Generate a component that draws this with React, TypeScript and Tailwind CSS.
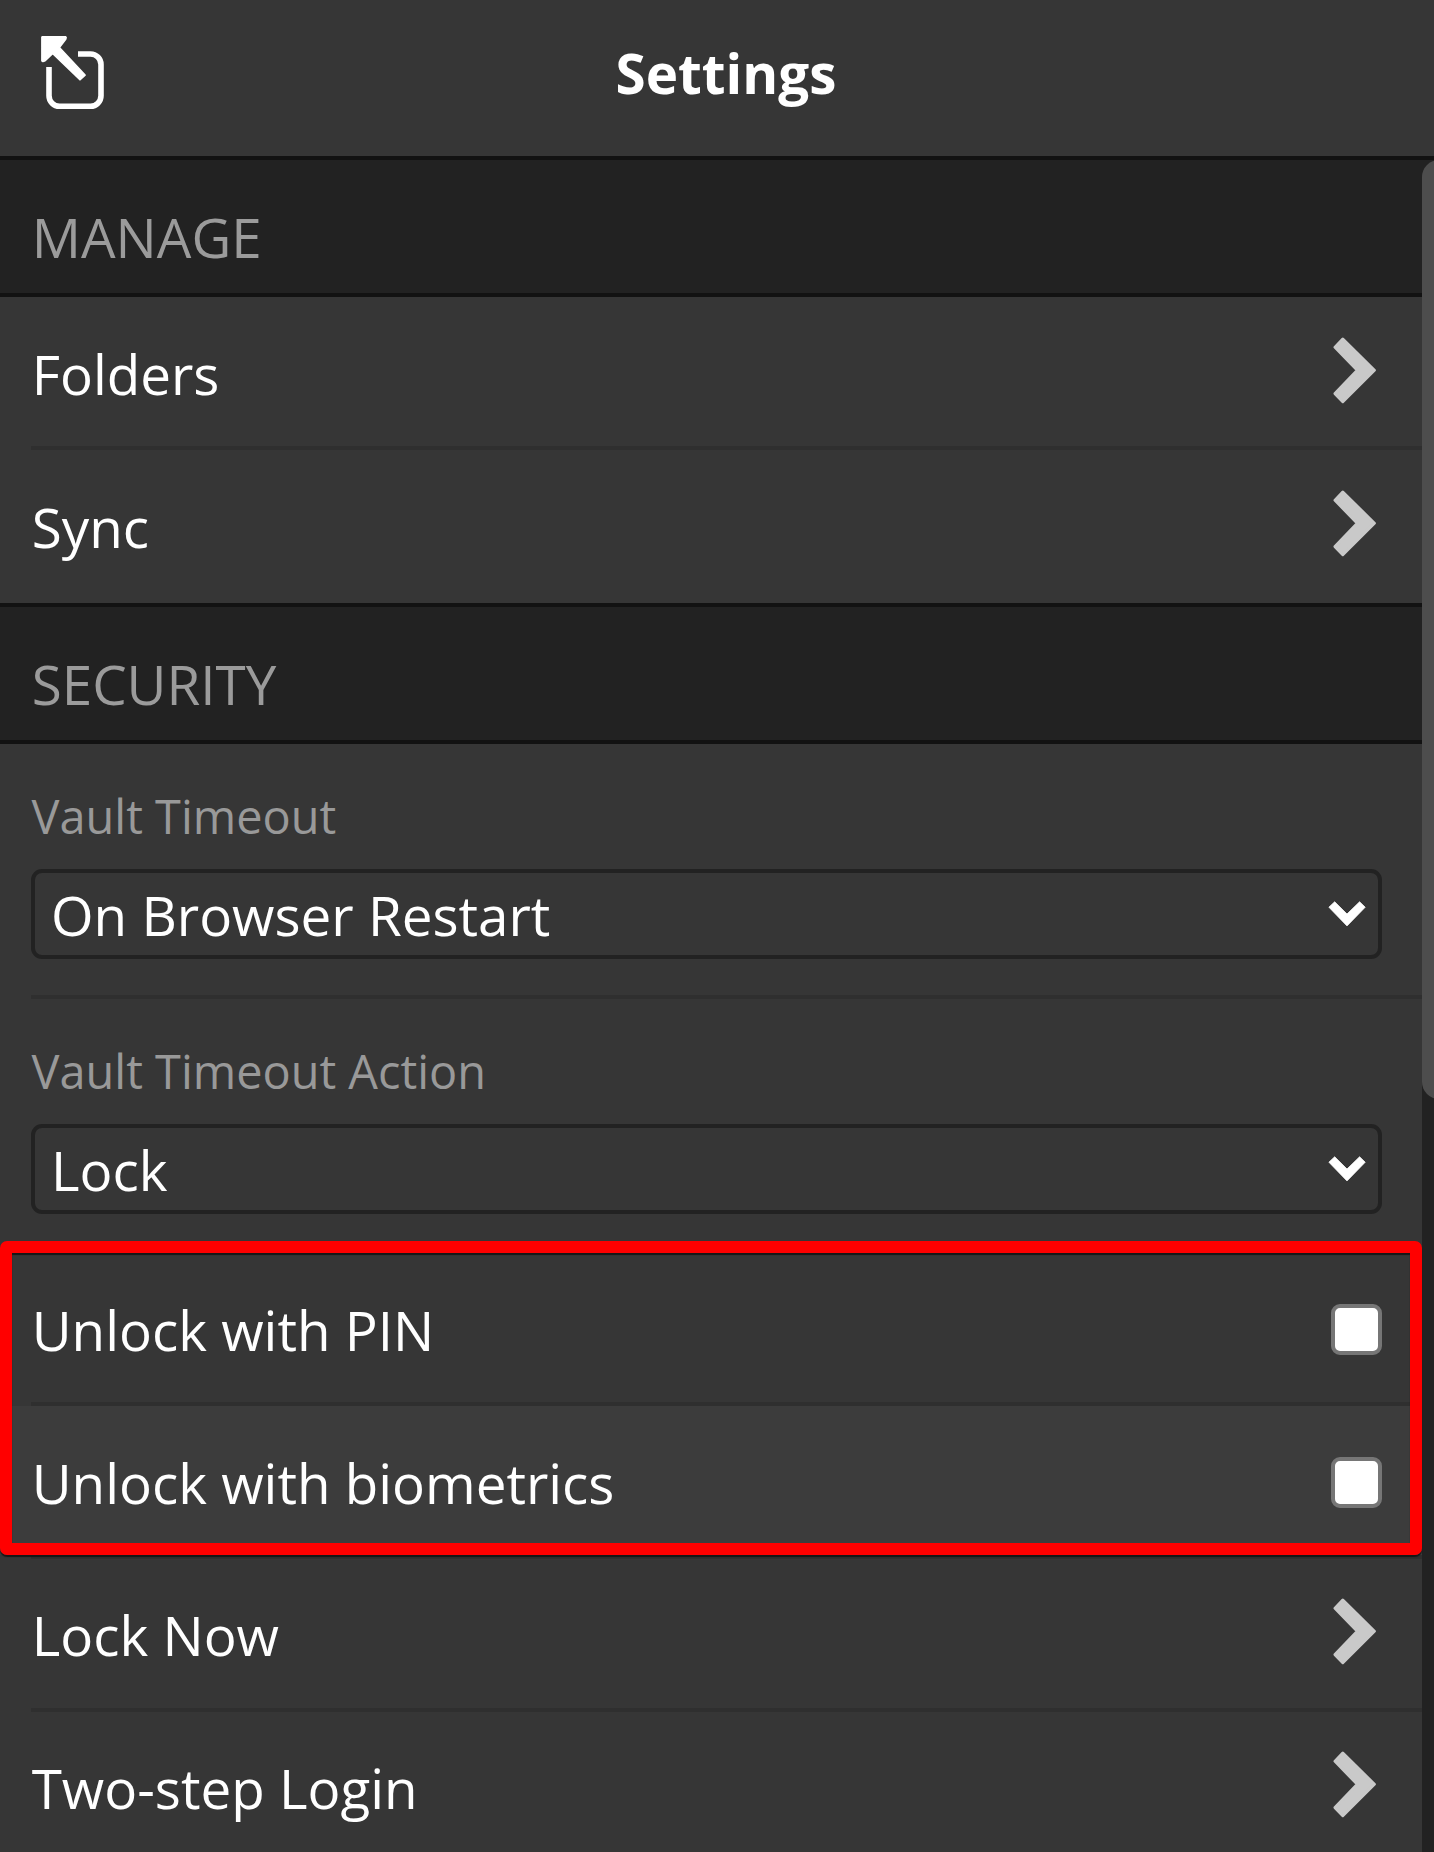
import type { ReactNode } from "react";

function PopOutIcon() {
  return (
    <svg width="66" height="76" viewBox="40 34 66 76" fill="none" className="block">
      <path d="M78 54H90.5A10.5 10.5 0 0 1 101 64.5V95.8A10.5 10.5 0 0 1 90.5 106.3H59.5A10.5 10.5 0 0 1 49 95.8V67" stroke="#fff" strokeWidth="5.6" />
      <path d="M42.3 36.8H65.5Q66.6 37.6 65.6 39.2L59.3 47.5L85 75L80 79.7L52.7 53.3L44.8 60.8Q42.6 62 42 60.6V37.2Z" fill="#fff" stroke="#fff" strokeWidth="1.8" strokeLinejoin="round" />
    </svg>
  );
}

function ChevronRight({ className = "mt-[39px]" }: { className?: string }) {
  return (
    <svg width="45" height="68" viewBox="0 0 45 68" className={`mr-[44px] block shrink-0 ${className}`}>
      <path d="M9.8 2L2 10.2L24.3 33.3L2 56.6L9.8 64.6L41.4 33.3Z" fill="#c9c9c9" stroke="#c9c9c9" strokeWidth="3" strokeLinejoin="round" />
    </svg>
  );
}

function ChevronDown() {
  return (
    <svg width="39" height="26" viewBox="0 0 39 26" className="mt-[28px] mr-[11px] block shrink-0">
      <path d="M6.7 0.8L19 13L31.6 0.8L37.2 6.2L19 24.9L0.9 6.2Z" fill="#fff" stroke="#fff" strokeWidth="0.8" strokeLinejoin="round" />
    </svg>
  );
}

function SectionHeading({ children }: { children: ReactNode }) {
  return (
    <h2 className="h-[137px] border-b-4 border-[#121212] bg-[#222222] pt-[40px] pl-[31.7px] text-[#9b9b9b]">
      {children}
    </h2>
  );
}

function Divider() {
  return <div className="ml-[31px] h-1 bg-[#2f2f2f]" />;
}

function Row({
  label,
  children,
  className = "h-[149px]",
  labelClass = "pt-[40px]",
}: {
  label: string;
  children: ReactNode;
  className?: string;
  labelClass?: string;
}) {
  return (
    <div className={`flex items-start justify-between pl-[31.7px] ${className}`}>
      <span className={labelClass}>{label}</span>
      {children}
    </div>
  );
}

function SelectField({ label, value, className }: { label: string; value: string; className: string }) {
  return (
    <div className={`pt-[41px] pr-[40px] pl-[31px] ${className}`}>
      <div className="pl-[0.6px] text-[46.9px] leading-[62px] text-[#999999]">{label}</div>
      <div className="mt-[22px] flex h-[90px] items-start justify-between rounded-[11px] border-4 border-[#222222]">
        <span className="pt-[5px] pl-[16px]">{value}</span>
        <ChevronDown />
      </div>
    </div>
  );
}

function Checkbox() {
  return <div className="mt-[51px] mr-[40px] size-[51px] shrink-0 rounded-[9px] border-4 border-[#767676] bg-white" />;
}

export default function App() {
  return (
    <div className="flex h-[1852px] w-[1434px] flex-col overflow-hidden bg-[#363636] font-['Open_Sans',sans-serif] text-[54.75px] leading-[73px] whitespace-nowrap text-white">
      <header className="grid h-[160px] shrink-0 grid-cols-[1fr_auto_1fr] items-start border-b-4 border-[#121212]">
        <div className="pt-[34px] pl-[40px]">
          <PopOutIcon />
        </div>
        <h1 className="pt-[36px] pl-[18px] font-bold">Settings</h1>
      </header>
      <div className="flex min-h-0 flex-1">
        <main className="relative w-[1422px]">
          <SectionHeading>MANAGE</SectionHeading>
          <Row label="Folders"><ChevronRight className="mt-[40px]" /></Row>
          <Divider />
          <Row label="Sync" className="h-[153px]"><ChevronRight className="mt-[40px]" /></Row>
          <div className="h-1 bg-[#121212]" />
          <SectionHeading>SECURITY</SectionHeading>
          <SelectField label="Vault Timeout" value="On Browser Restart" className="h-[251px]" />
          <Divider />
          <SelectField label="Vault Timeout Action" value="Lock" className="h-[250px]" />
          <Divider />
          <Row label="Unlock with PIN"><Checkbox /></Row>
          <Divider />
          <Row label="Unlock with biometrics" className="h-[149px] bg-[#3c3c3c]"><Checkbox /></Row>
          <Divider />
          <Row label="Lock Now" labelClass="pt-[39px]"><ChevronRight /></Row>
          <Divider />
          <Row label="Two-step Login" labelClass="pt-[39px]"><ChevronRight /></Row>
          <div className="absolute top-[1081px] left-0 h-[314px] w-[1422px] rounded-[7px] border-[12px] border-[#ff0000] shadow-[0_2px_1px_#161616,inset_0_2px_1px_#161616]" />
        </main>
        <div className="w-3 overflow-hidden bg-[#222222]">
          <div className="h-[939px] w-9 rounded-[17px] bg-[#4d4d4d]" />
        </div>
      </div>
    </div>
  );
}
